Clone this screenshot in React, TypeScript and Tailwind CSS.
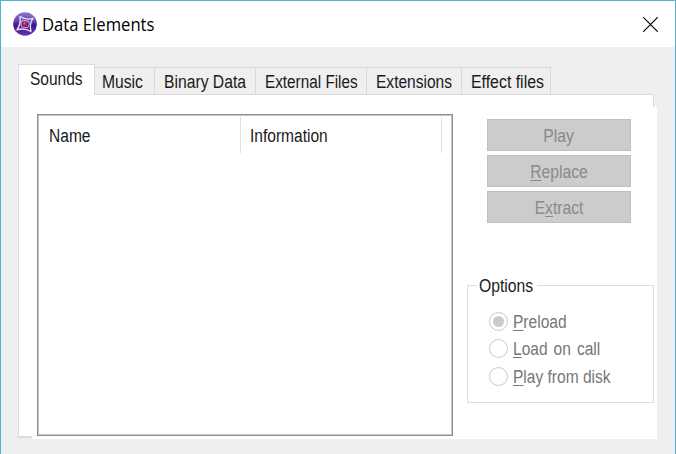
import type { ReactNode } from 'react';

const tabs = [
  { name: 'Music', box: 'w-[60px] pl-[7px]', scale: 'scale-x-[0.87]' },
  { name: 'Binary Data', box: 'w-[101px] pl-[9px]', scale: 'scale-x-[0.872]' },
  { name: 'External Files', box: 'w-[111px] pl-[9px]', scale: 'scale-x-[0.85]' },
  { name: 'Extensions', box: 'w-[95px] pl-[9px]', scale: 'scale-x-[0.863]' },
  { name: 'Effect files', box: 'w-[89px] pl-[9px]', scale: 'scale-x-[0.882]' },
];

function Label({ children, className = '' }: { children: ReactNode; className?: string }) {
  return <span className={`inline-block whitespace-nowrap ${className}`}>{children}</span>;
}

function Key({ children }: { children: ReactNode }) {
  return <span className="underline decoration-1 underline-offset-[2px] [text-decoration-skip-ink:none]">{children}</span>;
}

function PushButton({ children }: { children: ReactNode }) {
  return (
    <button className="flex h-8 w-[144px] items-center justify-center border border-[#bfbfbf] bg-[#cccccc] pt-[2px] text-[#8a8a8a]">
      <Label className="scale-x-[0.87]">{children}</Label>
    </button>
  );
}

function Radio({ checked = false, children, className = '' }: { checked?: boolean; children: ReactNode; className?: string }) {
  return (
    <div className={`flex h-[20px] items-center gap-[5px] text-[#777777] ${className}`}>
      <span className="flex size-[19px] shrink-0 items-center justify-center rounded-full border border-[#c8c8c8]">
        {checked && <span className="size-[11px] rounded-full bg-[#cbcbcb]" />}
      </span>
      <Label className="mt-[2px] origin-left scale-x-[0.863]">{children}</Label>
    </div>
  );
}

function AppIcon() {
  return (
    <svg className="size-6 shrink-0" viewBox="0 0 24 24">
      <defs>
        <linearGradient id="orb" x1="0" y1="0" x2="0" y2="1">
          <stop offset="0" stopColor="#8f78ca" />
          <stop offset="0.35" stopColor="#6a48b4" />
          <stop offset="0.55" stopColor="#42128f" />
          <stop offset="1" stopColor="#6534b0" />
        </linearGradient>
      </defs>
      <circle cx="12" cy="12" r="11.8" fill="url(#orb)" />
      <g fill="none" stroke="#e6e1ef" strokeWidth="1.4" strokeLinejoin="round">
        <path d="M7 4.5Q13 8.5 20 6.3Q16 12 18 19.5Q11 15.5 4 17.8Q8.2 11.5 7 4.5Z" />
        <path d="M9.3 8.4Q14 9 15.8 9.3Q17.2 12.5 14.8 15.5Q11 15.8 8.5 14.7Q7.2 11.5 9.3 8.4Z" strokeWidth="0.8" />
      </g>
      <circle cx="12" cy="12.2" r="2.3" fill="#d51f35" />
      <circle cx="11.3" cy="11.4" r="0.8" fill="#ff7770" />
    </svg>
  );
}

export default function App() {
  return (
    <div className="flex h-[454px] w-[676px] flex-col overflow-hidden border-x border-t border-[#4fb3d3] bg-[#efefef] font-['Liberation_Sans',Arial,sans-serif] text-[18px] leading-5 text-[#1a1a1a]">
      <header className="flex h-[46px] shrink-0 items-center bg-white pl-[12px] pr-[17px] text-black">
        <AppIcon />
        <Label className="ml-[5px] flex-1 origin-left scale-x-[0.925] font-['Open_Sans',sans-serif] text-[18px]">Data Elements</Label>
        <svg className="size-[15px]" viewBox="0 0 15 15" stroke="#000" strokeWidth="1.15">
          <path d="M.2.2 14.8 14.8M14.8.2.2 14.8" />
        </svg>
      </header>

      <nav className="z-10 ml-[17px] mt-[17px] flex h-[31px] shrink-0 items-end">
        <div className="flex h-[31px] w-[77px] items-center border-x border-t border-[#dcdcdc] bg-white pb-[2px] pl-[11px]">
          <Label className="origin-left scale-x-[0.86]">Sounds</Label>
        </div>
        {tabs.map((tab) => (
          <div key={tab.name} className={`flex h-[28px] items-center border-y border-r border-[#d9d9d9] bg-[#efefef] pt-[2px] ${tab.box}`}>
            <Label className={`origin-left ${tab.scale}`}>{tab.name}</Label>
          </div>
        ))}
      </nav>

      <main className="-mt-px ml-[17px] h-[344px] w-[636px] shrink-0 border border-b-2 border-[#dcdcdc] bg-white pl-[13px] pt-[12px]">
        <section className="flex h-[332px] w-[625px] bg-white pl-[5px] pt-[7px]">
          <div className="h-[322px] w-[416px] shrink-0 border border-[#8b8f96]">
            <div className="h-full border border-[#c3c5ca]">
              <div className="flex h-[37px] pt-px">
                <div className="w-[202px] border-r border-[#dedede] pl-[10px] pt-[9px]">
                  <Label className="origin-left scale-x-[0.865]">Name</Label>
                </div>
                <div className="w-[201px] border-r border-[#dedede] pl-[9px] pt-[9px]">
                  <Label className="origin-left scale-x-[0.863]">Information</Label>
                </div>
              </div>
            </div>
          </div>
          <div className="ml-[14px] w-[187px] pt-[5px]">
            <div className="flex flex-col gap-1 pl-[20px]">
              <PushButton>Play</PushButton>
              <PushButton><Key>R</Key>eplace</PushButton>
              <PushButton>E<Key>x</Key>tract</PushButton>
            </div>
            <fieldset className="mt-[52px] h-[128px] border border-[#dddddd] pl-[21px]">
              <legend className="-ml-[12px] h-5 w-[60px] pl-[2px]">
                <Label className="origin-left translate-y-px scale-x-[0.873]">Options</Label>
              </legend>
              <Radio checked className="mt-[16px]"><Key>P</Key>reload</Radio>
              <Radio className="mt-[7px] [word-spacing:2px]"><Key>L</Key>oad on call</Radio>
              <Radio className="mt-[8px]"><Key>P</Key>lay from disk</Radio>
            </fieldset>
          </div>
        </section>
      </main>
    </div>
  );
}
